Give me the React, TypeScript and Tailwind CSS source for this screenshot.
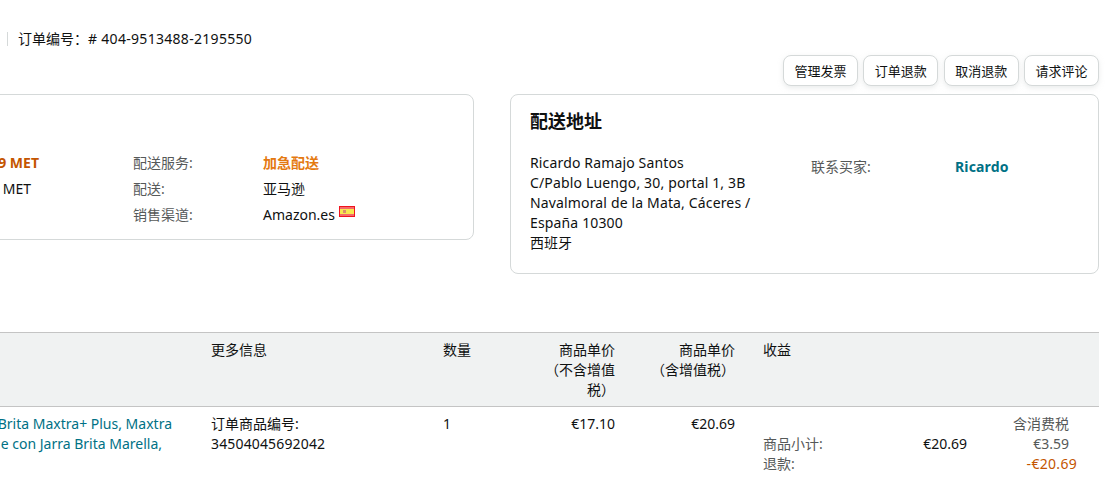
import React from "react";

const fontStack = {
  fontFamily: '"Noto Sans", "Noto Sans CJK SC", sans-serif',
};

const actions = ["管理发票", "订单退款", "取消退款", "请求评论"];

const SpainFlag = () => (
  <svg width="16" height="11" viewBox="0 0 16 11" className="shrink-0">
    <rect width="16" height="11" fill="#f0141e" />
    <rect x="1" y="1" width="14" height="9" fill="#f46a6a" />
    <rect x="1" y="3" width="14" height="5" fill="#f7e84f" />
    <rect x="4" y="4" width="3" height="3" fill="#d9906a" />
  </svg>
);

const ActionButton = ({ label }: { label: string }) => (
  <button className="h-[31px] w-[75px] rounded-lg border border-[#d5d9d9] bg-white text-[13px] text-[#0f1111] shadow-[0_2px_5px_0_rgba(213,217,217,0.5)]">
    {label}
  </button>
);

const ShippingRow = ({
  label,
  children,
}: {
  label: string;
  children: React.ReactNode;
}) => (
  <div className="flex h-[26px] items-center">
    <div className="w-[130px] text-[#565959]">{label}</div>
    <div className="flex items-center">{children}</div>
  </div>
);

export default function App() {
  return (
    <div
      className="h-[495px] w-[1109px] overflow-hidden bg-white text-sm leading-5 text-[#0f1111]"
      style={fontStack}
    >
      {/* Order number */}
      <div className="flex items-center pl-[7px] pt-[29px]">
        <div className="h-[14px] w-px bg-[#d5d9d9]" />
        <div className="ml-[10px]">
          订单编号：<span className="tracking-[0.3px]"># 404-9513488-2195550</span>
        </div>
      </div>

      {/* Actions */}
      <div className="mt-[6px] flex justify-end gap-[5.33px] pr-[10px]">
        {actions.map((action) => (
          <ActionButton key={action} label={action} />
        ))}
      </div>

      {/* Cards */}
      <div className="-ml-[20px] mt-[8px] flex items-start gap-[36px]">
        <div className="flex h-[146px] w-[494px] rounded-lg border border-[#d5d9d9] bg-white pt-[55px]">
          <div className="w-[152px] shrink-0 overflow-hidden">
            <div className="flex h-[26px] items-center justify-end whitespace-nowrap pr-[94px] font-bold text-[#c45500]">
              9 MET
            </div>
            <div className="flex h-[26px] items-center justify-end whitespace-nowrap pr-[102px]">
              MET
            </div>
          </div>
          <div>
            <ShippingRow label="配送服务:">
              <span className="font-bold text-[#e47911]">加急配送</span>
            </ShippingRow>
            <ShippingRow label="配送:">亚马逊</ShippingRow>
            <ShippingRow label="销售渠道:">
              <span>Amazon.es</span>
              <span className="-mt-[7px] ml-1">
                <SpainFlag />
              </span>
            </ShippingRow>
          </div>
        </div>

        <div className="h-[180px] w-[589px] rounded-lg border border-[#d5d9d9] bg-white px-[19px] pt-[14px]">
          <h2 className="text-lg font-bold leading-6">配送地址</h2>
          <div className="mt-[20px] flex">
            <div className="w-[281px] tracking-[0.15px]">
              <div>Ricardo Ramajo Santos</div>
              <div>C/Pablo Luengo, 30, portal 1, 3B</div>
              <div>Navalmoral de la Mata, Cáceres /</div>
              <div>España 10300</div>
              <div className="tracking-normal">西班牙</div>
            </div>
            <div className="mt-1 flex">
              <div className="w-[144px] text-[#565959]">联系买家:</div>
              <div className="font-bold text-[#007185] tracking-[0.15px]">Ricardo</div>
            </div>
          </div>
        </div>
      </div>

      {/* Table header */}
      <div className="mt-[58px] grid w-[1099px] grid-cols-[211px_232px_52px_120px_120px_1fr] border-y border-[#c4c4c4] bg-[#f0f2f2] pb-[6px] pt-[7px]">
        <div />
        <div>更多信息</div>
        <div>数量</div>
        <div className="ml-auto w-[76px] text-right">商品单价（不含增值税）</div>
        <div className="text-right">
          <div>商品单价</div>
          <div>（含增值税）</div>
        </div>
        <div className="pl-[28px]">收益</div>
      </div>

      {/* Table row */}
      <div className="grid w-[1099px] grid-cols-[211px_232px_52px_120px_120px_1fr] pt-[7px]">
        <div className="flex flex-col items-end overflow-hidden whitespace-nowrap text-[#007185]">
          <div className="mr-[39px]">Brita Maxtra+ Plus, Maxtra</div>
          <div className="mr-[49px]">e con Jarra Brita Marella,</div>
        </div>
        <div>
          <div>订单商品编号:</div>
          <div className="tracking-[0.15px]">34504045692042</div>
        </div>
        <div>1</div>
        <div className="text-right">€17.10</div>
        <div className="text-right">€20.69</div>
        <div className="grid grid-cols-[60px_144px_102px] pl-[28px] text-[#565959]">
          <div />
          <div />
          <div className="text-right">含消费税</div>
          <div>商品小计:</div>
          <div className="text-right text-[#0f1111]">€20.69</div>
          <div className="text-right">€3.59</div>
          <div>退款:</div>
          <div />
          <div className="-mr-[8px] text-right text-[#c45500] tracking-[0.3px]">-€20.69</div>
        </div>
      </div>
    </div>
  );
}
